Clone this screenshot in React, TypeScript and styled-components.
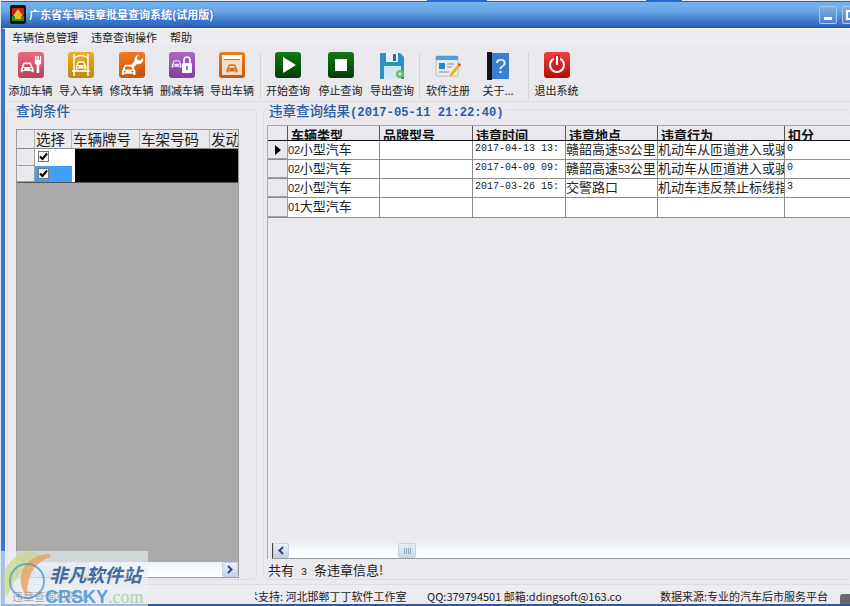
import React from 'react';
import styled, { createGlobalStyle } from 'styled-components';

const Global = createGlobalStyle`
  html, body { margin: 0; padding: 0; background: #fff; }
  * { box-sizing: border-box; }
`;
const CJK = `"Noto Sans CJK SC", "Liberation Sans", sans-serif`;

const Screen = styled.div`
  position: relative; width: 850px; height: 606px; overflow: hidden;
  display: flex; flex-direction: column; background: #ebe9ed;
  font-family: ${CJK}; color: #222; padding-top: 1px; border-left: 1px solid #dfe8f5;
`;
const TopEdge = styled.div<{ $x: number; $w: number }>`
  position: absolute; top: 0; left: ${p => p.$x}px; width: ${p => p.$w}px; height: 2px; background: #2a6cd8;
`;
const TitleBar = styled.div`
  height: 27px; flex: none; display: flex; align-items: center; padding: 0 0 0 9px; gap: 3px; overflow: hidden;
  border-top: 1px solid #3a5fa8; border-bottom: 1px solid #2a50a8;
  background: linear-gradient(#76b4ee 0%, #6aaae8 35%, #3f7fd0 70%, #2a5db8 100%);
  svg { flex: none; }
`;
const TitleText = styled.span`
  flex: none; width: 787px; color: #fff; font-size: 11px; line-height: 13px; font-weight: 700; text-shadow: 0 0 2px #2a5db8;
`;
const WinButton = styled.div`
  width: 18px; height: 18px; border: 1px solid #a8c8ee; border-radius: 2px; margin-right: 2px;
  background: linear-gradient(#7fb0e6, #4d80c8); position: relative; flex: none;
`;
const MinGlyph = styled.i`
  position: absolute; left: 4px; bottom: 3px; width: 8px; height: 3px; background: #fff;
`;
const MaxGlyph = styled.i`
  position: absolute; left: 3px; top: 3px; width: 10px; height: 10px; border: 2px solid #fff;
`;
const Body = styled.div`
  flex: 1; min-height: 0; display: flex; flex-direction: column; border-left: 4px solid #3f72c8; border-top: 1px solid #fff;
`;
const Menu = styled.div`
  height: 16px; flex: none; display: flex; align-items: center; gap: 13px; padding: 0 0 0 7px;
  font-size: 11px; color: #222; background: #ecebef;
`;
const Toolbar = styled.div`
  height: 57px; flex: none; display: flex; padding: 7px 0 0 0; background: #e9e8ec; border-bottom: 1px solid #dcdbdf;
`;
const Tool = styled.div<{ $w: number }>`
  width: ${p => p.$w}px; flex: none; display: flex; flex-direction: column; align-items: center;
  font-size: 11px; line-height: 14px; white-space: nowrap; color: #222;
  svg { display: block; height: 28px; }
`;
const ToolLabel = styled.span`
  margin-top: 3px;
`;
const Sep = styled.div<{ $ml: number }>`
  width: 1px; height: 47px; margin: 0 0 0 ${p => p.$ml}px; background: #d4d3d8; flex: none;
`;
const Panels = styled.div`
  flex: 1; min-height: 0; display: flex; gap: 6px; padding: 7px 0 4px 2px;
`;
const Group = styled.div<{ $w?: number }>`
  ${p => (p.$w ? `width:${p.$w}px;flex:none;` : 'flex:1;min-width:0;')}
  position: relative; border: 1px solid #dcdbe0; border-radius: 5px; border-right-width: ${p => (p.$w ? 1 : 0)}px;
  display: flex; flex-direction: column;
`;
const Legend = styled.div<{ $x: number; $y: number }>`
  position: absolute; left: ${p => p.$x}px; top: ${p => p.$y}px; padding: 0 1px; background: #ebe9ed;
  color: #2b5ea8; font-size: 13.5px; line-height: 16px; font-weight: 500; white-space: nowrap;
`;
const Stamp = styled.span`
  font-family: "Liberation Mono", monospace; font-size: 12.2px; font-weight: 700;
`;
const LeftGrid = styled.div`
  margin: 19px 17px 1px 8px; flex: 1; min-height: 0; display: flex; flex-direction: column;
  border: 1px solid #9a9a9a; border-bottom: 0; background: #aaaaaa;
`;
const LeftHead = styled.div`
  display: grid; grid-template-columns: 18px 37px 68px 70px 1fr; height: 19px; background: #e9e8ec; flex: none;
  border-bottom: 1px solid #8c8c8c;
`;
const LeftHeadCell = styled.div`
  font-size: 14.5px; line-height: 18px; height: 18px; padding-left: 1px; overflow: hidden; white-space: nowrap;
  border-right: 1px solid #b8b8bc;
  &:first-child { padding: 0; }
  &:last-child { border-right: 0; }
`;
const LeftRows = styled.div`
  display: grid; grid-template-columns: 18px 37px 3px 1fr; grid-template-rows: 17px 16px; flex: none;
  background: #fff; border-bottom: 1px solid #555;
`;
const RowHead = styled.div`
  background: #e9e8ec; border-bottom: 1px solid #a0a0a0; border-right: 1px solid #a0a0a0; display: flex; align-items: center; justify-content: center;
`;
const CheckCell = styled.div<{ $on?: boolean }>`
  background: ${p => (p.$on ? '#3f9ff5' : '#fff')}; display: flex; align-items: center; padding: 0 0 2px 3px;
`;
const CheckBox = styled.div`
  width: 11px; height: 11px; border: 1px solid #777; background: #f2f2f2; display: flex; align-items: center; justify-content: center;
`;
const Gap = styled.div`
  background: #fff; grid-row: span 2;
`;
const Redaction = styled.div`
  background: #000; grid-row: 1 / span 2; grid-column: 4;
`;
const Filler = styled.div`
  flex: 1; background: #aaaaaa;
`;
const HScroll = styled.div`
  height: 16px; flex: none; position: relative; display: flex; justify-content: space-between;
  border-bottom: 1px solid #9aa0a8; background: linear-gradient(#e6f1fb, #f6fafe 40%, #fff);
`;
const ScrollBtn = styled.div`
  width: 16px; height: 15px; display: flex; align-items: center; justify-content: center;
  background: linear-gradient(#eaf2fb, #bcd3ea); border: 1px solid #c2d2e4; border-radius: 2px;
`;
const Thumb = styled.div<{ $x: number; $w: number }>`
  position: absolute; left: ${p => p.$x}px; top: 0; width: ${p => p.$w}px; height: 15px;
  background: linear-gradient(#e4eef9, #c6d9ec); border: 1px solid #c6d4e4; border-radius: 2px;
  display: flex; align-items: center; justify-content: center;
`;
const Grip = styled.i`
  width: 7px; height: 6px; background: repeating-linear-gradient(90deg, #8fa6c0 0 1px, transparent 1px 2px);
`;
const RightGrid = styled.div`
  margin: 15px 0 0 3px; flex: 1; min-height: 0; display: flex; flex-direction: column;
  border: 1px solid #a8a8ac; border-right: 0; border-bottom: 0; position: relative;
`;
const Cols = '20px 92px 93px 93px 92px 127px 1fr';
const RightHead = styled.div`
  display: grid; grid-template-columns: ${Cols}; height: 15px; flex: none; overflow: hidden;
  background: #e9e8ec; border-bottom: 1px solid #111;
`;
const RightHeadCell = styled.div`
  font-size: 13px; line-height: 15px; font-weight: 700; padding: 1px 0 0 3px; border-right: 1px solid #555; color: #111;
  white-space: nowrap; overflow: hidden;
  &:last-child { border-right: 0; }
`;
const RightRow = styled.div<{ $h: number }>`
  display: grid; grid-template-columns: ${Cols}; height: ${p => p.$h}px; flex: none; background: #fff;
  border-bottom: 1px solid #8c8c8c;
`;
const Cell = styled.div<{ $mono?: boolean }>`
  font-size: ${p => (p.$mono ? 10 : 13)}px; font-family: ${p => (p.$mono ? `"Liberation Mono", monospace` : CJK)};
  line-height: 15px; padding-left: ${p => (p.$mono ? 2 : 0)}px; color: #222; white-space: nowrap; overflow: hidden;
  border-right: 1px solid #8c8c8c;
  &:last-child { border-right: 0; }
`;
const Digits = styled.span`
  font-size: 11px; font-family: "Liberation Sans", sans-serif; letter-spacing: -.2px;
`;
const GridFill = styled.div`
  flex: 1;
`;
const RightScroll = styled(HScroll)`
  margin-left: 4px; border-left: 1px solid #444;
`;
const Summary = styled.div`
  font-size: 13px; line-height: 18px; padding: 2px 0 0 4px; flex: none; height: 20px; white-space: nowrap;
`;
const SummaryNum = styled.span`
  font-family: "Liberation Mono", monospace; font-size: 10px; margin: 0 7px;
`;
const Status = styled.div`
  height: 20px; flex: none; display: flex; align-items: center; background: #ecebef; border-top: 1px solid #dcdbe0;
  font-size: 11px; color: #222; white-space: nowrap; padding-top: 3px;
`;
const StatusPane = styled.div<{ $w: number; $pad: number }>`
  width: ${p => p.$w}px; flex: none; padding-left: ${p => p.$pad}px; overflow: hidden; line-height: 16px;
`;
const Shifted = styled.span`
  display: inline-block; margin-left: -8px;
`;
const BottomEdge = styled.div`
  height: 2px; flex: none; background: #2f58a8;
`;
const Corner = styled.div`
  position: absolute; right: 0; bottom: 2px; width: 10px; height: 10px; border-radius: 3px 0 0 0; background: #66686c;
`;
const Watermark = styled.div`
  position: absolute; left: 0; bottom: 0; width: 147px; height: 55px; background: rgba(232, 240, 244, .62); overflow: hidden;
`;
const WmArt = styled.svg`
  position: absolute; left: 0; top: 0;
`;
const WmName = styled.div`
  position: absolute; left: 48px; top: 12px; font-size: 18.5px; line-height: 22px; font-weight: 700; font-style: italic;
  color: #46699c; white-space: nowrap;
`;
const WmSite = styled.div`
  position: absolute; left: 44px; top: 36px; font-family: "Liberation Sans", sans-serif; font-size: 18px; line-height: 20px;
  font-weight: 700; color: #5aa2d8; white-space: nowrap;
`;
const WmCom = styled.span`
  font-family: "Liberation Serif", serif; font-weight: 400; color: #a9d5a0;
`;

const Car = ({ x = 0, y = 0, s = 1, c = '#fff', d = '#c33' }: { x?: number; y?: number; s?: number; c?: string; d?: string }) => (
  <g transform={`translate(${x} ${y}) scale(${s})`}>
    <path d="M2 8 L4 3 Q4.5 2 6 2 H12 Q13.5 2 14 3 L16 8 Q17 9 17 10 V14 H14.5 V12.5 H3.5 V14 H1 V10 Q1 9 2 8 Z" fill={c} />
    <path d="M4.2 7.5 L5.4 4 H12.6 L13.8 7.5 Z" fill={d} />
    <circle cx="4.5" cy="10" r="1.2" fill={d} />
    <circle cx="13.5" cy="10" r="1.2" fill={d} />
  </g>
);
const Tile = ({ a, b, children }: { a: string; b: string; children?: React.ReactNode }) => {
  const id = `g${a.slice(1)}${b.slice(1)}`;
  return (
    <svg width="26" height="26" viewBox="0 0 26 26" style={{ height: 26, marginBottom: 2 }}>
      <defs>
        <linearGradient id={id} x1="0" y1="0" x2="0" y2="1">
          <stop offset="0" stopColor={a} />
          <stop offset="1" stopColor={b} />
        </linearGradient>
      </defs>
      <rect width="26" height="26" rx="3" fill={`url(#${id})`} />
      {children}
    </svg>
  );
};
const icons: Record<string, React.ReactNode> = {
  add: (
    <Tile a="#e86a80" b="#b8405c">
      <Car x={2} y={9} s={0.8} d="#c84a64" />
      <path d="M17 4 h1.5 v4 h1 v-4 h1.5 v4 h1 v-4 h1.2 v7 q0 1.5 -2 2 v8 h-2.5 v-8 q-2 -.5 -2 -2 Z" fill="#fff" />
    </Tile>
  ),
  import: (
    <Tile a="#e8b020" b="#c08810">
      <path d="M6 2 v22 M20 2 v22" stroke="#fff" strokeWidth="1.4" fill="none" />
      <path d="M6 6 q7 -5 14 0" stroke="#fff" strokeWidth="1.4" fill="none" />
      <Car x={7} y={8} s={0.67} d="#c99015" />
      <path d="M4 19 h18" stroke="#fff" strokeWidth="1.6" />
    </Tile>
  ),
  edit: (
    <Tile a="#f47a20" b="#c85a08">
      <path d="M26 24 V12 L14 24 Z" fill="#a84a04" opacity=".35" />
      <Car x={2} y={11} s={0.85} d="#d8620e" />
      <path d="M20 3 a5 5 0 0 0 -4.5 6.5 L11 14 l2.5 2.5 L18 12 a5 5 0 0 0 6 -6 l-3 2.5 l-2.5 -.8 l-.6 -2.5 Z" fill="#fff" />
    </Tile>
  ),
  del: (
    <Tile a="#a868c0" b="#84409c">
      <Car x={2} y={7} s={0.62} c="#f0e4f4" d="#9550b0" />
      <rect x="13" y="11" width="10" height="10" rx="1" fill="#fff" />
      <path d="M15 11 V8 a3 3 0 0 1 6 0 V11" stroke="#fff" strokeWidth="1.6" fill="none" />
      <rect x="17.2" y="14" width="1.6" height="4" fill="#9550b0" />
    </Tile>
  ),
  export: (
    <Tile a="#f07818" b="#c85808">
      <rect x="3" y="3" width="20" height="4" fill="#fff" />
      <path d="M4 7 v16 M22 7 v16" stroke="#fff" strokeWidth="1.6" />
      <rect x="5" y="8" width="16" height="15" fill="#f4dcc4" />
      <Car x={7} y={11} s={0.67} c="#d8680f" d="#f4dcc4" />
    </Tile>
  ),
  play: (
    <Tile a="#0f7a12" b="#033c06">
      <path d="M8 5 L21 13 L8 21 Z" fill="#fff" />
    </Tile>
  ),
  stop: (
    <Tile a="#0f7a12" b="#033c06">
      <rect x="7" y="7" width="12" height="12" fill="#fff" />
    </Tile>
  ),
  save: (
    <svg width="26" height="28" viewBox="0 0 26 28">
      <path d="M2 1 H21 L25 5 V27 H2 Q1 27 1 26 V2 Q1 1 2 1 Z" fill="#2d8fc4" />
      <rect x="7" y="1" width="12" height="9" fill="#e8f2f8" />
      <rect x="14" y="2" width="3" height="7" fill="#2d6f9c" />
      <rect x="5" y="14" width="17" height="13" fill="#d4e8f2" />
      <circle cx="21" cy="22" r="4" fill="#6cbf5c" />
      <path d="M19 22 h4 M21 20 v4" stroke="#d8f0d0" />
    </svg>
  ),
  reg: (
    <svg width="26" height="28" viewBox="0 0 26 28">
      <rect x="1" y="4" width="22" height="20" rx="1" fill="#e8ecf0" stroke="#b8c0c8" />
      <rect x="1" y="4" width="22" height="4" fill="#4aa0e0" />
      <rect x="4" y="11" width="6" height="6" fill="#3a80c0" />
      <path d="M12 12 h7 M12 15 h5 M4 20 h10" stroke="#889" />
      <path d="M15 22 L24 11 L26 13 L17 24 L14.5 24.5 Z" fill="#f0b020" />
      <path d="M24 11 L26 13 L25 14.5 L23 12.5 Z" fill="#d83030" />
    </svg>
  ),
  about: (
    <svg width="22" height="28" viewBox="0 0 22 28">
      <rect x="0" y="0" width="5" height="28" fill="#141414" />
      <rect x="5" y="1" width="17" height="26" fill="#3a7ed0" />
      <text x="13.5" y="21" fontSize="20" fill="#e8f0fa" textAnchor="middle" fontFamily="Liberation Sans, sans-serif">?</text>
    </svg>
  ),
  exit: (
    <Tile a="#f04040" b="#b80808">
      <circle cx="13" cy="13" r="7" stroke="#fff" strokeWidth="2" fill="none" />
      <rect x="10" y="3" width="6" height="9" fill="#d42020" />
      <rect x="12" y="4" width="2" height="9" fill="#fff" />
    </Tile>
  ),
};
const Logo = () => (
  <svg width="16" height="19" viewBox="0 0 16 19">
    <rect width="16" height="19" rx="2" fill="#1c1408" />
    <path d="M2 3 H14 V10 H2 Z" fill="#c8201a" />
    <path d="M3 11 L8 4 L13 11 Z" fill="#e8c020" />
    <path d="M2 11 H14 V16 H2 Z" fill="#2c8c30" />
    <rect x="5" y="11" width="6" height="3" fill="#e8c020" />
  </svg>
);
const ArrowL = () => (
  <svg width="8" height="9" viewBox="0 0 8 9"><path d="M6 1 L2.5 4.5 L6 8" stroke="#3a4a60" strokeWidth="2" fill="none" /></svg>
);
const ArrowR = () => (
  <svg width="8" height="9" viewBox="0 0 8 9"><path d="M2 1 L5.5 4.5 L2 8" stroke="#3a4a60" strokeWidth="2" fill="none" /></svg>
);
const Tick = () => (
  <svg width="9" height="9" viewBox="0 0 9 9"><path d="M1 4.5 L3.5 7 L8 1.5" stroke="#000" strokeWidth="2" fill="none" /></svg>
);

const rows = [
  ['02', '小型汽车', '', '2017-04-13 13:', '赣韶高速', '公里', '机动车从匝道进入或驶', '0'],
  ['02', '小型汽车', '', '2017-04-09 09:', '赣韶高速', '公里', '机动车从匝道进入或驶', '0'],
  ['02', '小型汽车', '', '2017-03-26 15:', '交警路口', '', '机动车违反禁止标线指', '3'],
  ['01', '大型汽车', '', '', '', '', '', ''],
];

export default function App() {
  return (
    <Screen>
      <Global />
      <TopEdge $x={426} $w={60} />
      <TopEdge $x={645} $w={36} />
      <TitleBar>
        <Logo />
        <TitleText>广东省车辆违章批量查询系统(试用版)</TitleText>
        <WinButton><MinGlyph /></WinButton>
        <WinButton><MaxGlyph /></WinButton>
      </TitleBar>
      <Body>
        <Menu>
          <span>车辆信息管理</span>
          <span>违章查询操作</span>
          <span>帮助</span>
        </Menu>
        <Toolbar>
          <Tool $w={51}>{icons.add}<ToolLabel>添加车辆</ToolLabel></Tool>
          <Tool $w={50}>{icons.import}<ToolLabel>导入车辆</ToolLabel></Tool>
          <Tool $w={51}>{icons.edit}<ToolLabel>修改车辆</ToolLabel></Tool>
          <Tool $w={50}>{icons.del}<ToolLabel>删减车辆</ToolLabel></Tool>
          <Tool $w={50}>{icons.export}<ToolLabel>导出车辆</ToolLabel></Tool>
          <Sep $ml={3} />
          <Tool $w={54}>{icons.play}<ToolLabel>开始查询</ToolLabel></Tool>
          <Tool $w={51}>{icons.stop}<ToolLabel>停止查询</ToolLabel></Tool>
          <Tool $w={52}>{icons.save}<ToolLabel>导出查询</ToolLabel></Tool>
          <Sep $ml={1} />
          <Tool $w={56}>{icons.reg}<ToolLabel>软件注册</ToolLabel></Tool>
          <Tool $w={44}>{icons.about}<ToolLabel>关于...</ToolLabel></Tool>
          <Sep $ml={8} />
          <Tool $w={55}>{icons.exit}<ToolLabel>退出系统</ToolLabel></Tool>
        </Toolbar>
        <Panels>
          <Group $w={250}>
            <Legend $x={7} $y={-8}>查询条件</Legend>
            <LeftGrid>
              <LeftHead>
                <LeftHeadCell />
                <LeftHeadCell>选择</LeftHeadCell>
                <LeftHeadCell>车辆牌号</LeftHeadCell>
                <LeftHeadCell>车架号码</LeftHeadCell>
                <LeftHeadCell>发动机号</LeftHeadCell>
              </LeftHead>
              <LeftRows>
                <RowHead />
                <CheckCell><CheckBox><Tick /></CheckBox></CheckCell>
                <Gap />
                <Redaction />
                <RowHead />
                <CheckCell $on><CheckBox><Tick /></CheckBox></CheckCell>
              </LeftRows>
              <Filler />
              <HScroll>
                <ScrollBtn><ArrowL /></ScrollBtn>
                <Thumb $x={16} $w={56}><Grip /></Thumb>
                <ScrollBtn><ArrowR /></ScrollBtn>
              </HScroll>
            </LeftGrid>
          </Group>
          <Group>
            <Legend $x={4} $y={-8}>
              违章查询结果<Stamp>(2017-05-11 21:22:40)</Stamp>
            </Legend>
            <RightGrid>
              <RightHead>
                <RightHeadCell />
                <RightHeadCell>车辆类型</RightHeadCell>
                <RightHeadCell>品牌型号</RightHeadCell>
                <RightHeadCell>违章时间</RightHeadCell>
                <RightHeadCell>违章地点</RightHeadCell>
                <RightHeadCell>违章行为</RightHeadCell>
                <RightHeadCell>扣分</RightHeadCell>
              </RightHead>
              {rows.map((r, i) => (
                <RightRow key={i} $h={i === 3 ? 20 : 19}>
                  <RowHead>
                    {i === 0 && (
                      <svg width="7" height="10" viewBox="0 0 7 10"><path d="M1 0 L7 5 L1 10 Z" fill="#000" /></svg>
                    )}
                  </RowHead>
                  <Cell><Digits>{r[0]}</Digits>{r[1]}</Cell>
                  <Cell>{r[2]}</Cell>
                  <Cell $mono>{r[3]}</Cell>
                  <Cell>{r[4]}{r[5] && <Digits>53</Digits>}{r[5]}</Cell>
                  <Cell>{r[6]}</Cell>
                  <Cell $mono>{r[7]}</Cell>
                </RightRow>
              ))}
              <GridFill />
              <RightScroll>
                <ScrollBtn><ArrowL /></ScrollBtn>
                <Thumb $x={125} $w={18}><Grip /></Thumb>
              </RightScroll>
            </RightGrid>
            <Summary>共有<SummaryNum>3</SummaryNum>条违章信息!</Summary>
          </Group>
        </Panels>
        <Status>
          <StatusPane $w={250} $pad={7}>违章查询已停止</StatusPane>
          <StatusPane $w={172} $pad={0}><Shifted>术支持: 河北邯郸丁丁软件工作室</Shifted></StatusPane>
          <StatusPane $w={195} $pad={0}>QQ:379794501 邮箱:ddingsoft@163.com</StatusPane>
          <StatusPane $w={228} $pad={38}>数据来源:专业的汽车后市服务平台</StatusPane>
        </Status>
      </Body>
      <BottomEdge />
      <Corner />
      <Watermark>
        <WmArt width="147" height="55" viewBox="0 0 147 55">
          <path d="M20 2 Q-6 18 6 46 Q12 30 22 20 Q30 12 44 6 Q30 -2 20 2 Z" fill="#c8d88a" opacity=".75" />
          <path d="M48 3 Q26 4 20 24 Q18 36 26 46 Q26 24 36 14 Q42 8 50 6 Z" fill="#e8a468" opacity=".85" />
          <circle cx="26" cy="30" r="17" stroke="#4a90c8" strokeWidth="2" fill="none" opacity=".7" />
        </WmArt>
        <WmName>非凡软件站</WmName>
        <WmSite>CRSKY<WmCom>.com</WmCom></WmSite>
      </Watermark>
    </Screen>
  );
}
